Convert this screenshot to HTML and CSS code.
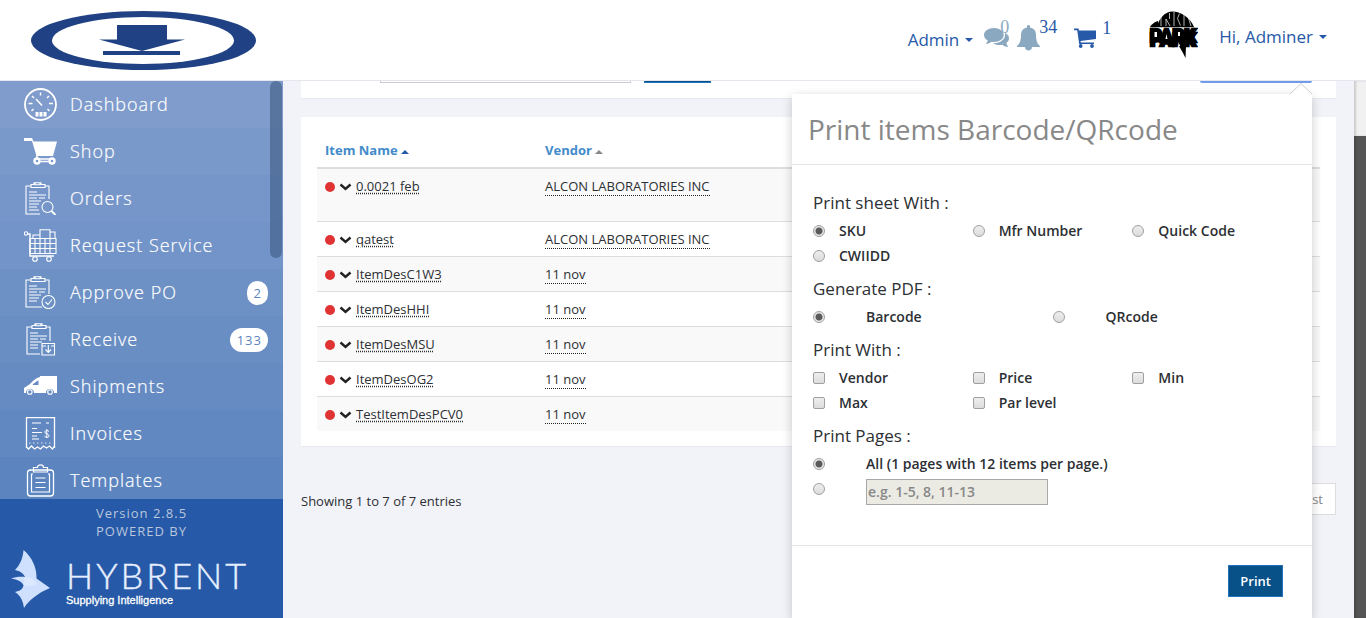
FILE: index.html
```html
<!DOCTYPE html>
<html lang="en">
<head>
<meta charset="utf-8">
<title>Print items</title>
<link rel="stylesheet" href="styles.css">
</head>
<body>
<header class="topbar">
  <a class="brand" href="#" aria-label="Home">
    <svg width="226" height="60" viewBox="0 0 226 60"><ellipse cx="113.500" cy="29.500" rx="112.500" ry="29.500" fill="#204183"/><ellipse cx="113" cy="29.500" rx="91" ry="23.500" fill="#fff"/><path d="M87 14h50v14.500h18L112 40 69 28.500h18zM73 40h77v4H73z" fill="#204183"/></svg>
  </a>
  <nav class="tools">
    <button class="menu-btn" type="button">Admin <span class="caret"></span></button>
    <a class="tool chat" href="#" aria-label="Messages">
      <svg width="25" height="22" viewBox="0 0 25 22" fill="#8ba8c1"><path d="M10 1c5.500 0 9.700 3 9.700 7s-4.200 7-9.700 7l-2.500-.2C5.500 16.500 3.500 17 2 17l1.800-3.500C1.500 12.300 0 10.300 0 8c0-4 4.500-7 10-7z"/><path d="M21 6c2.500 1 4 3 4 5.200 0 2-1 3.500-2.700 4.700L24 20c-2 0-4-.8-5.500-2.200-4 .8-7.500-.2-9.500-1.800 6.500.5 12-3 12-8z"/></svg>
      <span class="count">0</span>
    </a>
    <a class="tool bell" href="#" aria-label="Alerts">
      <svg width="23" height="26" viewBox="0 0 23 26" fill="#8ba8c1"><path d="M11.500 0c1 0 1.500.7 1.500 1.500v1c4 .8 6 3.500 6 7.500 0 6 1.500 9 4 11v1H0v-1c2.500-2 4-5 4-11 0-4 2-6.700 6-7.500v-1C10 .7 10.500 0 11.500 0zM8 22h7c0 2-1.500 3.500-3.500 3.500S8 24 8 22z"/></svg>
      <span class="count">34</span>
    </a>
    <a class="tool cart" href="#" aria-label="Cart">
      <svg width="22" height="20" viewBox="0 0 22 20" fill="#2659a7"><path d="M0 .5h4.500L5 2.500h17V11L6.500 13l.3 1.500H20V16H5.200L3.200 2.300H0z"/><circle cx="6.700" cy="18" r="1.900"/><circle cx="18" cy="18" r="1.900"/></svg>
      <span class="count">1</span>
    </a>
    <svg class="avatar" width="50" height="50" viewBox="0 0 50 50" role="img" aria-label="Avatar">
      <path d="M9 17C11 8 17 1.500 24.500 1.500S42 7 46 17z"/>
      <path d="M2 17h9l-1-6C6 12 3 15 2 17z"/>
      <path d="M13 5V16M18 16l0-7 4 7M21.500 3v6M26 2v14M31.500 3.500l-2 5 3 7M36 4.500V16M40.500 8L43 16" stroke="#fff" stroke-width=".7" fill="none"/>
      <path d="M2 17.500h45" stroke="#888" stroke-width=".5"/>
      <g font-family="Roboto, sans-serif" font-weight="900" font-size="18" stroke="#000" stroke-width="2.600"><text x="2" y="32">PARK</text><text x="2" y="36">PARK</text></g>
      <g fill="#fff"><path d="M6.500 22h2.500v5H6.500zM18.500 24l1 5h-2zM30 22h2v4h-2zM30.500 32l2 5h-2z"/></g>
      <path d="M31 36h7l-.5 12L35 43z"/>
    </svg>
    <button class="menu-btn user" type="button">Hi, Adminer <span class="caret"></span></button>
  </nav>
</header>

<div class="layout">
  <aside class="sidebar">
    <nav class="side-nav">
      <a class="nav-item" href="#"><svg class="nav-icon" viewBox="0 0 33 33"><circle cx="16.500" cy="16.500" r="15.500" stroke-width="1.800"/><path d="M16.500 4.500v3M4.500 15.500h4M25 15.500h4M8 8l2 2M25 8l-2 2M7.500 23l2-2M25.500 23l-2-2M12 11l6 6.500" stroke-width="1.500"/><path d="M13 24v4.500M17 24v4.500M21 24v4.500" stroke-width="3"/></svg><span>Dashboard</span></a>
      <a class="nav-item" href="#"><svg class="nav-icon" viewBox="0 0 33 33"><path d="M0 3h8l1.500 3.500H33L29 21H12.500L8 6H0z" fill="#fff" stroke="none"/><circle cx="13" cy="26" r="2.500" stroke-width="2.400"/><circle cx="28" cy="26" r="2.500" stroke-width="2.400"/><path d="M13 20v3.500M13 24h15M15 26.500h11" stroke-width="1.600"/></svg><span>Shop</span></a>
      <a class="nav-item" href="#"><svg class="nav-icon" viewBox="0 0 33 33"><path d="M7 4H2v28h14M21 4h4v13M7 2.500h3V.7h7v1.800h4v3H7zM11 .7h5v2h-5zM5 10h8M5 13h17M5 16h8M15 16h6M5 19h12M5 22h10M5 25h8M5 28h10"/><circle cx="23.500" cy="25" r="5.500"/><path d="M27.500 29l4 4" stroke-width="1.800"/></svg><span>Orders</span></a>
      <a class="nav-item" href="#"><svg class="nav-icon" viewBox="0 0 33 33"><circle cx="2" cy="4.500" r="1.700"/><path d="M3.500 5H6v22h24" stroke-width="1.400"/><path d="M6 9.500h26v15H6zM6 14.500h26M6 19.500h26M11 9v15M16 9v15M21 9v15M26 9v15M9 9V6h7M16 9V.7h10V9M26 3h5v6"/><circle cx="11" cy="30" r="2.300"/><circle cx="25" cy="30" r="2.300"/></svg><span>Request Service</span></a>
      <a class="nav-item" href="#"><svg class="nav-icon" viewBox="0 0 33 33"><path d="M7 4H2v27h16M21 4h4v14M7 2.500h3V.7h7v1.800h4v3H7zM11 .7h5v2h-5zM5 10h8M5 13h17M5 16h8M15 16h6M5 19h12M5 22h10M5 25h8"/><circle cx="24.500" cy="26" r="6.500"/><path d="M21.500 26l2.500 2.500 4-5"/></svg><span>Approve PO</span><span class="badge">2</span></a>
      <a class="nav-item" href="#"><svg class="nav-icon" viewBox="0 0 33 33"><path d="M8 4H3v27h13M22 4h4v14M8 2.500h3V.7h7v1.800h4v3H8zM12 .7h5v2h-5zM6 10h8M6 13h17M6 16h8M16 16h6M6 19h12M6 22h8M6 25h8"/><path d="M18 20.500h12.500v11.500H18zM18 23h4M27 23h4M24.300 22v7M21.500 26.500l2.800 3 2.800-3"/></svg><span>Receive</span><span class="badge">133</span></a>
      <a class="nav-item" href="#"><svg class="nav-icon" viewBox="0 0 33 33"><path d="M16 7V6h17v17h-3a4 4 0 0 0-8 0H10a4 4 0 0 0-8 0H0v-5l6-4c2-2 5-6 10-7z" fill="#fff" stroke="none"/><path d="M8.500 15c1.500-2 3.500-3.500 6-4.500V15z" fill="#668bc3" stroke="none"/><circle cx="5.800" cy="22" r="2.300"/><circle cx="26" cy="22" r="2.300"/></svg><span>Shipments</span></a>
      <a class="nav-item" href="#"><svg class="nav-icon" viewBox="0 0 33 33"><path d="M2.500 31V.7h28V31" stroke-width="1.300"/><path d="M2.500 30l2 2 3-3 3 3 3-2 3 2 3-3 3 2 3-2 3 3 2-3" stroke-width="1.300"/><path d="M8 6h9M22 6h3M8 11.500h5M8 15.500h10M8 19h5M8 22h7" stroke-width="1.200"/><path d="M5 26h24" stroke-dasharray="1.500 2.500" stroke-width=".8"/><path d="M25 14.500c-2-2-5-.5-4 1.300.7 1.200 4 1 4 3 0 2-3 2-4.500.5M22.800 12v9" stroke-width="1"/></svg><span>Invoices</span></a>
      <a class="nav-item" href="#"><svg class="nav-icon" viewBox="0 0 33 33"><rect x="3.500" y="6" width="26" height="26" rx="3" stroke-width="1.300"/><path d="M9 10H7.500v18h18V10H24M9.500 3.500h4C13.500 0 19.500 0 19.500 3.500h4V8h-14zM11.500 14h10M11.500 18.500h10M11.500 23.500h10" stroke-width="1.200"/></svg><span>Templates</span></a>
    </nav>
    <div class="side-thumb"></div>
    <footer class="side-foot">
      <p>Version 2.8.5</p>
      <p>POWERED BY</p>
      <div class="logo">
        <svg width="39" height="58" viewBox="0 0 39 58"><path d="M12.500 0C21 7 26 18 25.500 28.500L39 38C27 43 18 50 13 58c-1-7-3-12-9-16 5-1 8-3 8.500-7C10 31 5 29 0 28.500c4-1.500 9-2 14-1.500-2-4-5-6-10-7C9 15 12 8 12.500 0z" fill="#cfe0ff"/><path d="M14 27c6 0 10 3 12 7-5 3-10 2-13.500 1 1-3 0-6 1.500-8z" fill="#dce8ff"/></svg>
        <div class="wordmark"><span class="name">HYBRENT</span><span class="tag">Supplying Intelligence</span></div>
      </div>
    </footer>
  </aside>

  <main class="content">
    <section class="card filter">
      <input class="filter-input" type="text" aria-label="Search items">
      <button class="btn btn-search" type="button" aria-label="Search"></button>
      <button class="btn-outline" type="button" aria-label="Print barcode"></button>
    </section>

    <section class="card list">
      <table class="items">
        <thead><tr><th class="col-name">Item Name <span class="sort active"></span></th><th>Vendor <span class="sort"></span></th></tr></thead>
        <tbody>
          <tr class="tall"><td><span class="dot"></span><svg class="chev" viewBox="0 0 12 8"><path d="M1 1.500L6 6l5-4.500"/></svg><a class="item" href="#">0.0021 feb</a></td><td><a class="vendor" href="#">ALCON LABORATORIES INC</a></td></tr>
          <tr><td><span class="dot"></span><svg class="chev" viewBox="0 0 12 8"><path d="M1 1.500L6 6l5-4.500"/></svg><a class="item" href="#">qatest</a></td><td><a class="vendor" href="#">ALCON LABORATORIES INC</a></td></tr>
          <tr><td><span class="dot"></span><svg class="chev" viewBox="0 0 12 8"><path d="M1 1.500L6 6l5-4.500"/></svg><a class="item" href="#">ItemDesC1W3</a></td><td><a class="vendor" href="#">11 nov</a></td></tr>
          <tr><td><span class="dot"></span><svg class="chev" viewBox="0 0 12 8"><path d="M1 1.500L6 6l5-4.500"/></svg><a class="item" href="#">ItemDesHHI</a></td><td><a class="vendor" href="#">11 nov</a></td></tr>
          <tr><td><span class="dot"></span><svg class="chev" viewBox="0 0 12 8"><path d="M1 1.500L6 6l5-4.500"/></svg><a class="item" href="#">ItemDesMSU</a></td><td><a class="vendor" href="#">11 nov</a></td></tr>
          <tr><td><span class="dot"></span><svg class="chev" viewBox="0 0 12 8"><path d="M1 1.500L6 6l5-4.500"/></svg><a class="item" href="#">ItemDesOG2</a></td><td><a class="vendor" href="#">11 nov</a></td></tr>
          <tr><td><span class="dot"></span><svg class="chev" viewBox="0 0 12 8"><path d="M1 1.500L6 6l5-4.500"/></svg><a class="item" href="#">TestItemDesPCV0</a></td><td><a class="vendor" href="#">11 nov</a></td></tr>
        </tbody>
      </table>
    </section>

    <div class="list-foot">
      <span class="entries">Showing 1 to 7 of 7 entries</span>
      <button class="page-btn" type="button">Last</button>
    </div>

    <form class="popover">
      <svg class="arrow" width="22" height="11" viewBox="0 0 22 11"><path d="M0 11L11 .5 22 11" fill="#fff" stroke="#ccc"/></svg>
      <h2 class="pop-title">Print items Barcode/QRcode</h2>
      <div class="pop-body">
        <h3>Print sheet With :</h3>
        <div class="opts three">
          <label><input type="radio" name="sheet" checked>SKU</label>
          <label><input type="radio" name="sheet">Mfr Number</label>
          <label><input type="radio" name="sheet">Quick Code</label>
          <label><input type="radio" name="sheet">CWIIDD</label>
        </div>
        <h3>Generate PDF :</h3>
        <div class="opts two">
          <label><input type="radio" name="pdf" checked>Barcode</label>
          <label><input type="radio" name="pdf">QRcode</label>
        </div>
        <h3>Print With :</h3>
        <div class="opts three">
          <label><input type="checkbox">Vendor</label>
          <label><input type="checkbox">Price</label>
          <label><input type="checkbox">Min</label>
          <label><input type="checkbox">Max</label>
          <label><input type="checkbox">Par level</label>
        </div>
        <h3>Print Pages :</h3>
        <div class="opts one">
          <label><input type="radio" name="pages" checked>All (1 pages with 12 items per page.)</label>
          <div class="range"><input type="radio" name="pages" aria-label="Page range"><input class="range-text" type="text" placeholder="e.g. 1-5, 8, 11-13" aria-label="Pages to print" disabled></div>
        </div>
      </div>
      <div class="pop-foot"><button class="btn" type="button">Print</button></div>
    </form>
  </main>
  <div class="page-scroll"><div class="page-thumb"></div></div>
</div>
</body>
</html>
```

FILE: styles.css
```css
* { box-sizing: border-box; }
body {
  margin: 0;
  height: 100vh;
  display: flex;
  flex-direction: column;
  overflow: hidden;
  font-family: "Open Sans", sans-serif;
  font-size: 13px;
  color: #2c2f33;
  background: #f2f3f8;
}
button, input { font: inherit; }
a { color: inherit; text-decoration: none; }
h2, h3, p { margin: 0; font-weight: 400; }

.topbar {
  flex: none;
  height: 81px;
  display: flex;
  justify-content: space-between;
  background: #fff;
  border-bottom: 1px solid #e6e6ee;
}
.brand { padding: 11px 0 0 30px; }
.tools {
  display: flex;
  align-items: flex-start;
  padding: 10px 39px 0 0;
  color: #2659a7;
}
.menu-btn {
  display: flex;
  align-items: center;
  gap: 6px;
  height: 24px;
  margin-top: 17px;
  padding: 0;
  border: 0;
  background: none;
  color: #2659a7;
  font-size: 17px;
}
.menu-btn.user { margin-top: 14px; margin-left: 21px; }
.caret {
  margin-top: 2px;
  border: 4px solid transparent;
  border-top-color: #2659a7;
  border-bottom: 0;
}
.tool { display: flex; position: relative; font-family: "Liberation Serif", serif; font-size: 18px; line-height: 18px; }
.chat { margin: 17px 0 0 11px; }
.chat .count { position: absolute; right: 0; top: -9px; color: #8ba8c1; }
.bell { margin: 15px 0 0 8px; }
.bell .count { margin: -7px 0 0 -1px; }
.cart { margin: 18px 0 0 17px; }
.cart .count { margin: -9px 0 0 6px; }
.avatar { margin-left: 37px; }

.layout { flex: 1; min-height: 0; display: flex; }

.sidebar {
  position: relative;
  flex: none;
  width: 283px;
  display: flex;
  flex-direction: column;
  background: #2659a7;
}
.side-nav { flex: 1; min-height: 0; overflow: hidden; background: #5c85c0; }
.nav-item {
  display: flex;
  align-items: center;
  gap: 13px;
  height: 47px;
  padding: 0 15px 0 24px;
  color: #fff;
  font-size: 18px;
  line-height: 24px;
  letter-spacing: 1px;
  background: #7f9ccc;
}
.nav-item > span:nth-child(2) { padding-bottom: 2px; font-weight: 300; -webkit-text-stroke: 0.2px #fff; }
.nav-item:nth-child(2) { background: #7a99cb; }
.nav-item:nth-child(3) { background: #7696ca; }
.nav-item:nth-child(4) { background: #7294c8; }
.nav-item:nth-child(5) { background: #6d91c5; }
.nav-item:nth-child(6) { background: #698ec4; }
.nav-item:nth-child(7) { background: #668bc3; }
.nav-item:nth-child(8) { background: #6288c1; }
.nav-item:nth-child(9) { background: #5c85c0; }
.nav-icon { flex: none; width: 33px; height: 33px; fill: none; stroke: #fff; stroke-width: 1.1; }
.badge {
  margin-left: auto;
  padding: 0 6px 0 7px;
  border-radius: 12px;
  background: #fff;
  color: #5c85c0;
  font-size: 13px;
}
.side-thumb {
  position: absolute;
  top: 0;
  right: 1px;
  width: 12px;
  height: 177px;
  border-radius: 6px;
  background: rgba(50, 77, 116, .5);
}
.side-foot {
  flex: none;
  height: 119px;
  padding-top: 5px;
  text-align: center;
  color: #b9c6dd;
  letter-spacing: 1px;
  line-height: 18px;
}
.logo { display: flex; gap: 16px; padding: 10px 0 0 11px; text-align: left; letter-spacing: 0; }
.wordmark { display: flex; flex-direction: column; color: #e6efff; }
.name { padding-top: 7px; font: 300 36px/37px Lato, sans-serif; letter-spacing: 3px; -webkit-text-stroke: 0.4px #e6efff; }
.tag { font: 11px/12px "Liberation Sans", Arial, sans-serif; color: #fff; -webkit-text-stroke: 0.3px #fff; }

.content { position: relative; flex: 1; min-width: 0; padding: 0 18px; overflow: hidden; }
.card { background: #fff; border-bottom: 1px solid #e8e8ee; }
.filter { display: flex; margin-top: -30px; padding: 0 24px 15px 79px; }
.filter-input { width: 251px; height: 32px; margin-right: 13px; border: 1px solid #ccc; }
.btn {
  height: 32px;
  padding: 0 12px;
  border: 1px solid #2273bd;
  background: #075088;
  color: #fff;
  font-weight: 600;
}
.btn-search { width: 67px; }
.btn-outline { width: 112px; height: 32px; margin-left: auto; border: 1px solid #6f9bea; border-bottom-width: 2px; border-radius: 2px; background: #fff; }
.list { margin-top: 18px; padding: 16px 16px 15px; }

.items { width: 100%; border-spacing: 0; table-layout: fixed; }
.items th {
  height: 36px;
  padding: 0 8px;
  border-bottom: 2px solid #ddd;
  text-align: left;
  color: #428bca;
  font-weight: 700;
}
.col-name { width: 220px; }
.sort { display: inline-block; vertical-align: middle; border: 4px solid transparent; border-bottom-color: #888; border-top: 0; }
.sort.active { border-bottom-color: #2659a7; }
.items td {
  height: 35px;
  padding: 8px 8px 0;
  border-top: 1px solid #ddd;
  vertical-align: top;
  line-height: 18px;
}
.items .tall td { height: 52px; border-top: 0; }
.items tbody tr:nth-child(odd) { background: #f9f9f9; }
.dot { display: inline-block; width: 10px; height: 10px; margin-right: 4px; border-radius: 50%; background: #e03434; vertical-align: -1px; }
.chev { width: 13px; height: 8px; margin-right: 4px; fill: none; stroke: #222; stroke-width: 2.4; }
.item { text-decoration: underline dotted; text-underline-offset: 2px; }
.vendor { display: inline-block; border-bottom: 1px dotted #222; }

.list-foot { display: flex; justify-content: space-between; align-items: center; margin-top: 36px; }
.entries { padding-top: 4px; }
.page-btn { height: 32px; padding: 0 12px; border: 1px solid #ddd; background: #fff; color: #888; }

.popover {
  position: absolute;
  top: 13px;
  right: 42px;
  bottom: 0;
  width: 520px;
  background: #fff;
  box-shadow: 0 3px 10px rgba(0, 0, 0, .2);
}
.arrow { position: absolute; top: -11px; right: 0; }
.pop-title { height: 71px; padding: 0 16px; border-bottom: 1px solid #e5e5e5; color: #888; font-size: 28px; line-height: 70px; }
.pop-body { padding: 17px 20px 0 21px; height: 381px; border-bottom: 1px solid #e5e5e5; }
.pop-body h3 { padding-top: 6px; font-size: 17px; line-height: 30px; }
.opts { display: grid; grid-auto-rows: 25px; font-size: 14px; font-weight: 600; }
.three { grid-template-columns: repeat(3, 1fr); }
.two { grid-template-columns: repeat(2, 1fr); }
.opts label { display: flex; align-items: center; gap: 14px; }
.two label, .one label { gap: 41px; }
.opts input[type="radio"], .opts input[type="checkbox"] {
  appearance: none;
  flex: none;
  width: 12px;
  height: 12px;
  margin: 0;
  border: 1px solid #a0a0a0;
  border-radius: 2px;
  background: linear-gradient(#eee, #dcdcdc);
}
.opts input[type="radio"] { border-radius: 50%; }
.opts input[type="radio"]:checked { background: radial-gradient(#5a5a5a 0 3px, #e6e6e6 4px); }
.range { display: flex; align-items: center; gap: 41px; }
.range-text { width: 182px; height: 26px; margin-top: 6px; padding: 0 1px; border: 1px solid #a9a9a9; background: #ebebe4; }
.range-text::placeholder { color: #888; opacity: 1; }
.pop-foot { display: flex; justify-content: flex-end; padding: 19px 29px; }
.pop-foot .btn { padding: 0 11px; }

.page-scroll { flex: none; width: 12px; background: #555; box-shadow: inset 2px 0 2px rgba(0, 0, 0, .15); }
.page-thumb { height: 55px; background: #f1f1f1; box-shadow: inset 2px 0 2px rgba(0, 0, 0, .15); }
```
